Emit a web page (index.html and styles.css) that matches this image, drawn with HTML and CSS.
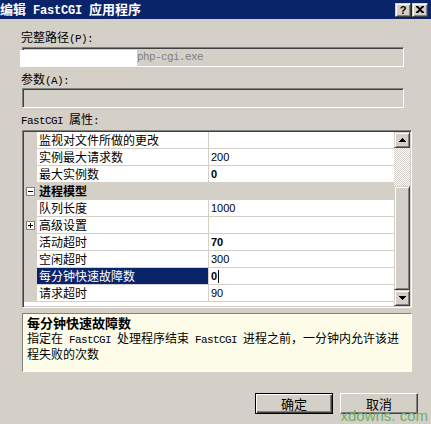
FILE: index.html
```html
<!DOCTYPE html>
<html>
<head>
  <title>编辑 FastCGI 应用程序</title>
<link rel="stylesheet" href="styles.css">
</head>

<body>

<div class='titlebar'>
  <span class='title'>编辑<span class='en'> FastCGI </span>应用程序</span>
  <div class='caption-btns'>
    <span class='cbtn'>?</span>
    <span class='cbtn'>
      <svg width="8" height="7" viewBox="0 0 8 7"><path d="M0 0h2l2 2 2-2h2v1L5 3.5 8 6v1H6L4 5 2 7H0V6l3-2.5L0 1z"/></svg>
    </span>
  </div>
</div>

<div class='content'>
  <div class='label l1'>完整路径<span class='en'>(P):</span></div>
  <div class='textbox'><span class='redact'></span><span class='en path'>php-cgi.exe</span></div>
  <div class='label l2'>参数<span class='en'>(A):</span></div>
  <div class='textbox tb2'></div>
  <div class='label l3'><span class='en'>FastCGI </span>属性<span class='en'>:</span></div>

  <div class='grid'>
    <div class='rows'>
      <div class='row'><span class='mg'></span><span class='name'>监视对文件所做的更改</span><span class='value'></span></div>
      <div class='row'><span class='mg'></span><span class='name'>实例最大请求数</span><span class='value'>200</span></div>
      <div class='row'><span class='mg'></span><span class='name'>最大实例数</span><span class='value b'>0</span></div>
      <div class='row cat'>
        <span class='mg'><svg width="9" height="9"><rect x="0.5" y="0.5" width="8" height="8" fill="#fff" stroke="#808080"/><path d="M2 4.5h5" stroke="#000"/></svg></span>
        <span class='name'>进程模型</span><span class='value'></span>
      </div>
      <div class='row'><span class='mg'></span><span class='name'>队列长度</span><span class='value'>1000</span></div>
      <div class='row'>
        <span class='mg'><svg width="9" height="9"><rect x="0.5" y="0.5" width="8" height="8" fill="#fff" stroke="#808080"/><path d="M2 4.5h5M4.5 2v5" stroke="#000"/></svg></span>
        <span class='name'>高级设置</span><span class='value'></span>
      </div>
      <div class='row'><span class='mg'></span><span class='name'>活动超时</span><span class='value b'>70</span></div>
      <div class='row'><span class='mg'></span><span class='name'>空闲超时</span><span class='value'>300</span></div>
      <div class='row sel'><span class='mg'></span><span class='name'>每分钟快速故障数</span><span class='value b'>0<span class='caret'></span></span></div>
      <div class='row'><span class='mg'></span><span class='name'>请求超时</span><span class='value'>90</span></div>
    </div>
    <div class='scrollbar'>
      <div class='sbtn'><svg width="7" height="4"><path d="M3 0h1v1h1v1h1v1h1v1H0V3h1V2h1V1h1z"/></svg></div>
      <div class='track'></div>
      <div class='thumb'></div>
      <div class='sbtn'><svg width="7" height="4"><path d="M0 0h7v1H6v1H5v1H4v1H3V3H2V2H1V1H0z"/></svg></div>
    </div>
  </div>

  <div class='help'>
    <div class='help-title'>每分钟快速故障数</div>
    <div class='help-desc'>指定在<span class='en'> FastCGI </span>处理程序结束<span class='en'> FastCGI </span>进程之前，一分钟内允许该进<br>程失败的次数</div>
  </div>

  <div class='buttons'>
    <span class='btn default'>确定</span>
    <span class='btn'>取消</span>
  </div>
</div>

<div class='watermark'>xdowns. com</div>

</body>
</html>
```

FILE: styles.css
```css
html, body {
  margin: 0;
  background: #d4d0c8;
}
body {
  width: 431px;
  height: 424px;
  overflow: hidden;
  position: relative;
  font-family: "Noto Sans CJK SC", sans-serif;
  font-size: 12px;
  color: #000;
}
.en {
  font-family: "Liberation Mono", monospace;
  font-size: 11px;
  letter-spacing: -0.6px;
  white-space: pre;
}

/* title bar */
.titlebar {
  height: 19px;
  background: #0a246a;
  color: #fff;
  display: flex;
  align-items: center;
  justify-content: space-between;
}
.title {
  font-size: 13px;
  font-weight: bold;
  line-height: 19px;
  white-space: nowrap;
}
.title .en {
  font-size: 12px;
  font-weight: bold;
  letter-spacing: -0.2px;
}
.caption-btns {
  display: flex;
  gap: 1px;
  margin-right: 3px;
}
.cbtn {
  width: 16px;
  height: 14px;
  box-sizing: border-box;
  background: #d4d0c8;
  border: 1px solid;
  border-color: #d4d0c8 #404040 #404040 #d4d0c8;
  box-shadow: inset 1px 1px #fff, inset -1px -1px #808080;
  display: flex;
  align-items: center;
  justify-content: center;
  color: #000;
  font: bold 11px "Liberation Sans", sans-serif;
}

/* form */
.content {
  padding-left: 22px;
}
.label {
  margin-left: -1px;
  height: 16px;
  line-height: 16px;
  white-space: nowrap;
}
.l1 { margin-top: 10px; }
.l2 { margin-top: 4px; }
.l3 { margin-top: 3px; }
.textbox {
  width: 382px;
  height: 20px;
  box-sizing: border-box;
  margin-top: 2px;
  border: 1px solid;
  border-color: #808080 #fff #fff #808080;
  padding: 1px;
  box-shadow: inset 1px 1px #404040, inset -1px -1px #d4d0c8;
  display: flex;
  align-items: center;
}
.tb2 { margin-top: 1px; }
.redact {
  width: 117px;
  align-self: stretch;
  margin: 1px 0 -2px -4px;
  background: #fff;
}
.path {
  color: #808080;
}

/* property grid */
.grid {
  margin-top: 3px;
  width: 390px;
  height: 178px;
  box-sizing: border-box;
  border: 1px solid;
  border-color: #808080 #fff #fff #808080;
  padding: 1px;
  box-shadow: inset 1px 1px #404040, inset -1px -1px #d4d0c8;
  display: flex;
}
.rows {
  flex: 1;
  background: #fff;
}
.row {
  display: flex;
  height: 17px;
}
.mg {
  width: 13px;
  background: #d4d0c8;
  display: flex;
  align-items: center;
  padding-left: 2px;
  box-sizing: border-box;
}
.name {
  width: 172px;
  box-sizing: border-box;
  padding-left: 2px;
  border-right: 1px solid #d4d0c8;
  border-bottom: 1px solid #d4d0c8;
  line-height: 16px;
  white-space: nowrap;
  overflow: hidden;
}
.value {
  flex: 1;
  padding-left: 2px;
  border-bottom: 1px solid #d4d0c8;
  font: 11px "Liberation Sans", sans-serif;
  line-height: 16px;
  display: flex;
  align-items: center;
}
.value.b {
  font-weight: bold;
}
.caret {
  width: 1px;
  height: 13px;
  background: #000;
  margin-left: 1px;
}
.cat {
  background: #d4d0c8;
}
.cat .name {
  font-weight: bold;
  border-right-color: #d4d0c8;
}
.sel .name {
  background: #0a246a;
  color: #fff;
}

.scrollbar {
  width: 16px;
  display: flex;
  flex-direction: column;
}
.sbtn, .thumb {
  box-sizing: border-box;
  background: #d4d0c8;
  border: 1px solid;
  border-color: #d4d0c8 #404040 #404040 #d4d0c8;
  box-shadow: inset 1px 1px #fff, inset -1px -1px #808080;
}
.sbtn {
  height: 16px;
  display: flex;
  align-items: center;
  justify-content: center;
}
.track {
  height: 38px;
  background: repeating-conic-gradient(#fff 0 25%, #d4d0c8 0 50%) 0 0 / 2px 2px;
}
.thumb {
  flex: 1;
}

/* help pane */
.help {
  margin-top: 5px;
  width: 390px;
  height: 59px;
  box-sizing: border-box;
  border: 1px solid;
  border-color: #808080 #fff #fff #808080;
  background: #fcfce9;
  padding: 2px 0 0 4px;
}
.help-title {
  font-size: 13px;
  font-weight: bold;
  line-height: 13px;
}
.help-desc {
  margin-top: 2px;
  line-height: 13px;
  white-space: nowrap;
}

/* buttons */
.buttons {
  display: flex;
  justify-content: flex-end;
  gap: 7px;
  margin-top: 21px;
  padding-right: 13px;
}
.btn {
  width: 78px;
  height: 21px;
  box-sizing: border-box;
  background: #d4d0c8;
  border: 1px solid;
  border-color: #fff #404040 #404040 #fff;
  box-shadow: inset -1px -1px #808080;
  display: flex;
  align-items: center;
  justify-content: center;
  font-size: 13px;
}
.btn.default {
  border-color: #000;
  box-shadow: inset 1px 1px #fff, inset -1px -1px #404040, inset -2px -2px #808080;
}

.watermark {
  position: absolute;
  right: 3px;
  bottom: 0;
  font: 15px/17px "Liberation Sans", sans-serif;
  color: #68b268;
  white-space: pre;
}
```
